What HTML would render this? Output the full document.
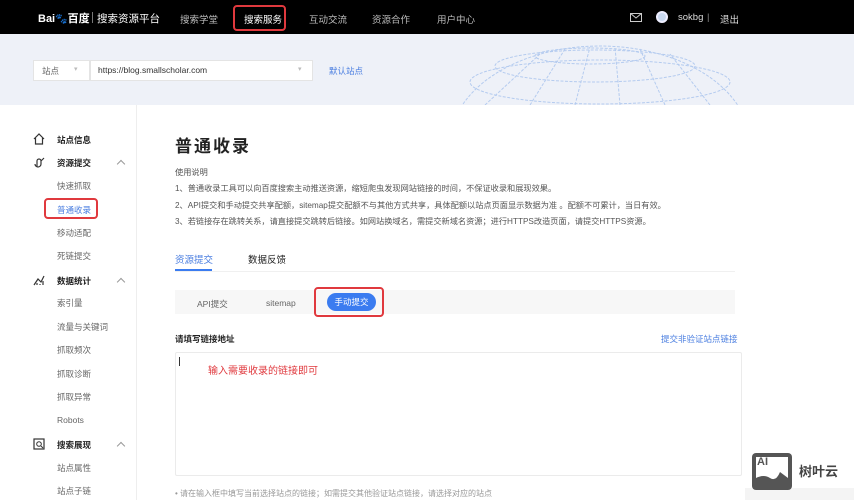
<!DOCTYPE html>
<html><head><meta charset="utf-8"><style>
*{margin:0;padding:0;box-sizing:border-box}
body{width:854px;height:500px;overflow:hidden;background:#fff;font-family:"Liberation Sans","Noto Sans CJK SC",sans-serif;position:relative;color:#333}
.a{position:absolute;white-space:nowrap}
.hd{position:absolute;left:0;top:0;width:854px;height:34px;background:#000}
.nav{color:#bbb;font-size:9.5px;top:12px}
.band{position:absolute;left:0;top:34px;width:854px;height:71px;background:#eef1f8;overflow:hidden}
.side{font-size:8.5px;color:#666}
.sh{font-size:8.5px;color:#222;font-weight:bold}
.chev{width:6px;height:6px;border-left:1px solid #999;border-top:1px solid #999;transform:rotate(45deg)}
.desc{font-size:8.2px;color:#555;left:175px}
</style></head><body>
<div class="hd"></div>
<div class="a" style="left:38px;top:10px;color:#fff;font-size:11px;font-weight:bold">Bai<span style="font-size:10px">🐾</span>百度</div>
<div class="a" style="left:92px;top:12px;width:1px;height:11px;background:#777"></div>
<div class="a" style="left:97px;top:11px;color:#fff;font-size:10.5px">搜索资源平台</div>
<div class="a nav" style="left:180px">搜索学堂</div>
<div class="a nav" style="left:244px;color:#fff">搜索服务</div>
<div class="a" style="left:233px;top:5px;width:53px;height:26px;border:2px solid #e0393e;border-radius:4px"></div>
<div class="a nav" style="left:309px">互动交流</div>
<div class="a nav" style="left:372px">资源合作</div>
<div class="a nav" style="left:437px">用户中心</div>
<div class="a" style="left:630px;top:13px;width:12px;height:9px;border:1px solid #ccc"></div>
<svg class="a" style="left:630px;top:13px" width="12" height="9"><path d="M0 0L6 5L12 0" stroke="#ccc" fill="none"/></svg>
<div class="a" style="left:656px;top:11px;width:12px;height:12px;border-radius:50%;background:#c8d8f0;border:2px solid #eef"></div>
<div class="a nav" style="left:678px;color:#ddd">sokbg</div>
<div class="a nav" style="left:707px;color:#888">|</div>
<div class="a nav" style="left:720px;color:#ddd">退出</div>
<div class="band">
<svg width="854" height="71" style="position:absolute;left:0;top:0"><g fill="none" stroke="#b4cbef" stroke-width="1" stroke-dasharray="3 1.5"><ellipse cx="600" cy="110" rx="150" ry="98"/><ellipse cx="590" cy="22" rx="55" ry="8"/><ellipse cx="595" cy="32" rx="100" ry="16"/><ellipse cx="600" cy="48" rx="130" ry="22"/><path d="M485 71L540 20M530 71L565 15M575 71L590 13M620 71L615 13M665 71L640 15M710 71L670 20"/></g></svg>
<div class="a" style="left:33px;top:26px;width:57px;height:21px;background:#fff;border:1px solid #e4e4e4"></div>
<div class="a" style="left:42px;top:31px;font-size:8.5px;color:#666">站点</div>
<div class="a" style="left:74px;top:31px;font-size:7px;color:#bbb">▾</div>
<div class="a" style="left:90px;top:26px;width:223px;height:21px;background:#fff;border:1px solid #e4e4e4"></div>
<div class="a" style="left:98px;top:31px;font-size:8.5px;color:#333">https://blog.smallscholar.com</div>
<div class="a" style="left:298px;top:31px;font-size:7px;color:#bbb">▾</div>
<div class="a" style="left:329px;top:31px;font-size:8.5px;color:#4a7ee0">默认站点</div>
</div>
<div class="a" style="left:136px;top:105px;width:1px;height:395px;background:#eee"></div>
<svg class="a" style="left:33px;top:133px" width="12" height="12"><path d="M1 6L6 1L11 6M2.5 5V11H9.5V5" stroke="#333" fill="none" stroke-width="1.2"/></svg>
<div class="a sh" style="left:57px;top:134px">站点信息</div>
<svg class="a" style="left:33px;top:156px" width="12" height="12"><path d="M4 11V5a2 2 0 014 0v3M8 5l3-3M2 8a3 3 0 006 0" stroke="#333" fill="none" stroke-width="1.2"/></svg>
<div class="a sh" style="left:57px;top:157px">资源提交</div>
<div class="a chev" style="left:118px;top:161px"></div>
<div class="a side" style="left:57px;top:180px">快速抓取</div>
<div class="a side" style="left:57px;top:204px;color:#4a7ee0">普通收录</div>
<div class="a" style="left:44px;top:198px;width:54px;height:21px;border:2px solid #e0393e;border-radius:4px"></div>
<div class="a side" style="left:57px;top:227px">移动适配</div>
<div class="a side" style="left:57px;top:250px">死链提交</div>
<svg class="a" style="left:33px;top:274px" width="12" height="12"><path d="M1 11L5 5L8 8L11 2M4 11V9M7 11V10M10 11V7" stroke="#333" fill="none" stroke-width="1.2"/></svg>
<div class="a sh" style="left:57px;top:275px">数据统计</div>
<div class="a chev" style="left:118px;top:279px"></div>
<div class="a side" style="left:57px;top:297px">索引量</div>
<div class="a side" style="left:57px;top:321px">流量与关键词</div>
<div class="a side" style="left:57px;top:344px">抓取频次</div>
<div class="a side" style="left:57px;top:368px">抓取诊断</div>
<div class="a side" style="left:57px;top:391px">抓取异常</div>
<div class="a side" style="left:57px;top:415px">Robots</div>
<svg class="a" style="left:33px;top:438px" width="12" height="12"><rect x="1" y="1" width="10" height="10" stroke="#333" fill="none" stroke-width="1.2"/><circle cx="6" cy="6" r="2.3" stroke="#333" fill="none"/><path d="M8 8L10 10" stroke="#333"/></svg>
<div class="a sh" style="left:57px;top:439px">搜索展现</div>
<div class="a chev" style="left:118px;top:443px"></div>
<div class="a side" style="left:57px;top:462px">站点属性</div>
<div class="a side" style="left:57px;top:485px">站点子链</div>

<div class="a" style="left:175px;top:132px;font-size:17px;font-weight:bold;color:#222;letter-spacing:2px">普通收录</div>
<div class="a desc" style="top:166px">使用说明</div>
<div class="a desc" style="top:182px">1、普通收录工具可以向百度搜索主动推送资源，缩短爬虫发现网站链接的时间，不保证收录和展现效果。</div>
<div class="a desc" style="top:199px">2、API提交和手动提交共享配额，sitemap提交配额不与其他方式共享，具体配额以站点页面显示数据为准 。配额不可累计，当日有效。</div>
<div class="a desc" style="top:215px">3、若链接存在跳转关系，请直接提交跳转后链接。如网站换域名，需提交新域名资源；进行HTTPS改造页面，请提交HTTPS资源。</div>
<div class="a" style="left:175px;top:252px;font-size:9.5px;color:#4a7ee0">资源提交</div>
<div class="a" style="left:248px;top:252px;font-size:9.5px;color:#222">数据反馈</div>
<div class="a" style="left:175px;top:271px;width:560px;height:1px;background:#f0f0f0"></div>
<div class="a" style="left:175px;top:269px;width:37px;height:2px;background:#3b7cf0"></div>
<div class="a" style="left:175px;top:290px;width:560px;height:24px;background:#f7f7f7"></div>
<div class="a" style="left:197px;top:298px;font-size:8.5px;color:#666">API提交</div>
<div class="a" style="left:266px;top:298px;font-size:8.5px;color:#666">sitemap</div>
<div class="a" style="left:327px;top:293px;width:49px;height:18px;background:#3b7cf0;border-radius:9px;color:#fff;font-size:8.5px;text-align:center;line-height:18px">手动提交</div>
<div class="a" style="left:314px;top:287px;width:70px;height:30px;border:2px solid #e0393e;border-radius:4px"></div>
<div class="a" style="left:175px;top:333px;font-size:8.5px;font-weight:bold;color:#222">请填写链接地址</div>
<div class="a" style="left:661px;top:333px;font-size:8.5px;color:#4a7ee0">提交非验证站点链接</div>
<div class="a" style="left:175px;top:352px;width:567px;height:124px;border:1px solid #ebebeb;border-radius:2px"></div>
<div class="a" style="left:179px;top:357px;width:1px;height:9px;background:#333"></div>
<div class="a" style="left:208px;top:362px;font-size:10px;color:#e0393e">输入需要收录的链接即可</div>
<div class="a" style="left:175px;top:488px;font-size:8px;color:#999">• 请在输入框中填写当前选择站点的链接；如需提交其他验证站点链接，请选择对应的站点</div>
<div class="a" style="left:745px;top:488px;width:109px;height:12px;background:#f4f4f4"></div>
<div class="a" style="left:752px;top:453px;width:40px;height:37px;background:#555;border-radius:4px"></div>
<div class="a" style="left:756px;top:457px;width:32px;height:26px;background:#fff"></div>
<div class="a" style="left:757px;top:456px;font-size:11px;font-weight:bold;color:#555;line-height:13px">AI</div>
<svg class="a" style="left:756px;top:468px" width="32" height="15"><path d="M0 15L0 10Q8 6 14 10T24 4L32 10V15Z" fill="#555"/></svg>
<div class="a" style="left:799px;top:461px;font-size:13px;font-weight:bold;color:#444">树叶云</div>
</body></html>
